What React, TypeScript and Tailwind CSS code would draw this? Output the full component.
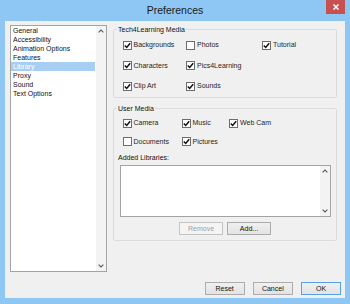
import React from "react";

function Check({ checked, label }: { checked: boolean; label: string }) {
  return (
    <div className="flex items-center h-[10px]">
      <div className="w-[9px] h-[9px] border border-[#6e6e6e] bg-white flex items-center justify-center shrink-0">
        {checked && (
          <svg width="7" height="7" viewBox="0 0 7 7">
            <path d="M0.8 3.4 L2.7 5.4 L6.2 1.2" stroke="#111" strokeWidth="1.5" fill="none" />
          </svg>
        )}
      </div>
      <span className="ml-[2px] text-[7px] leading-[10px] text-[#1e1e1e] whitespace-nowrap">{label}</span>
    </div>
  );
}

function Chevron({ up }: { up: boolean }) {
  return (
    <svg width="6" height="4" viewBox="0 0 6 4">
      <path d={up ? "M0.6 3.4 L3 1 L5.4 3.4" : "M0.6 0.6 L3 3 L5.4 0.6"} stroke="#5a5a5a" strokeWidth="1.1" fill="none" />
    </svg>
  );
}

function ScrollCol() {
  return (
    <div className="w-[10px] bg-[#f3f3f3] flex flex-col justify-between">
      <div className="h-[10px] flex items-center justify-center">
        <Chevron up />
      </div>
      <div className="h-[10px] flex items-center justify-center">
        <Chevron up={false} />
      </div>
    </div>
  );
}

function Btn({ label, disabled, def, w }: { label: string; disabled?: boolean; def?: boolean; w: string }) {
  const base = "h-[13.3px] flex items-center justify-center text-[7px] leading-[10px] border ";
  let cls = "border-[#acacac] bg-gradient-to-b from-[#f0f0f0] to-[#e3e3e3] text-[#111]";
  if (disabled) cls = "border-[#c4c4c4] bg-[#f4f4f4] text-[#a0a0a0]";
  if (def) cls = "border-[#56a0e6] bg-gradient-to-b from-[#f0f0f0] to-[#e3e3e3] text-[#111]";
  return <div className={base + cls + " " + w}>{label}</div>;
}

export default function App() {
  const items = ["General", "Accessibility", "Animation Options", "Features", "Library", "Proxy", "Sound", "Text Options"];
  return (
    <div className="w-[350px] h-[304px] bg-[#8ec6f4] flex flex-col font-['Liberation_Sans',Arial,sans-serif] overflow-hidden">
      <div className="h-[21px] grid grid-cols-[1fr_auto_1fr] items-start">
        <div />
        <div className="text-[10.5px] leading-[21px] text-[#1a1a1a]">Preferences</div>
        <div className="justify-self-end mr-[5px] w-[19px] h-[14px] bg-[#c75050] flex items-center justify-center">
          <svg width="6" height="6" viewBox="0 0 6 6">
            <path d="M0.5 0.5 L5.5 5.5 M5.5 0.5 L0.5 5.5" stroke="#fff" strokeWidth="1.5" />
          </svg>
        </div>
      </div>
      <div className="mx-[5px] h-[277px] bg-[#f0f0f0] flex flex-col">
        <div className="flex pt-[4px] pl-[5px]">
          <div className="w-[97px] h-[247px] border border-[#a3a3a3] bg-white flex">
            <div className="flex-1 flex flex-col pr-[1px]">
              {items.map((t) => (
                <div
                  key={t}
                  className={
                    "h-[9px] leading-[9px] text-[7px] pl-[2px] whitespace-nowrap " +
                    (t === "Library" ? "bg-[#a6cff3] text-white" : "text-[#111]")
                  }
                >
                  {t}
                </div>
              ))}
            </div>
            <ScrollCol />
          </div>
          <div className="ml-[6px] w-[224px] flex flex-col">
            <fieldset className="border border-[#dcdcdc] rounded-[2px] pb-[6px]">
              <legend className="ml-[3px] px-[1px] text-[7px] leading-[9px] text-[#111]">Tech4Learning Media</legend>
              <div className="grid grid-cols-[63.5px_76px_auto] gap-y-[10.5px] pt-[6px] pl-[8.5px]">
                <Check checked label="Backgrounds" />
                <Check checked={false} label="Photos" />
                <Check checked label="Tutorial" />
                <Check checked label="Characters" />
                <Check checked label="Pics4Learning" />
                <div />
                <Check checked label="Clip Art" />
                <Check checked label="Sounds" />
                <div />
              </div>
            </fieldset>
            <fieldset className="mt-[5.5px] border border-[#dcdcdc] rounded-[2px] pb-[4.7px]">
              <legend className="ml-[3px] px-[1px] text-[7px] leading-[9px] text-[#111]">User Media</legend>
              <div className="grid grid-cols-[59px_47.6px_auto] gap-y-[8.5px] pt-[5.5px] pl-[8.5px]">
                <Check checked label="Camera" />
                <Check checked label="Music" />
                <Check checked label="Web Cam" />
                <Check checked={false} label="Documents" />
                <Check checked label="Pictures" />
                <div />
              </div>
              <div className="mt-[6px] pl-[4px] text-[7px] leading-[9px] text-[#111]">Added Libraries:</div>
              <div className="mt-[3.5px] mx-[5.5px] h-[52px] border border-[#a3a3a3] bg-white flex justify-end">
                <ScrollCol />
              </div>
              <div className="mt-[5px] flex justify-center gap-[4px]">
                <Btn label="Remove" disabled w="w-[44px]" />
                <Btn label="Add..." w="w-[44px]" />
              </div>
            </fieldset>
          </div>
        </div>
        <div className="mt-[10px] flex justify-end gap-[8px] pr-[4px]">
          <Btn label="Reset" w="w-[40px]" />
          <Btn label="Cancel" w="w-[40.4px]" />
          <Btn label="OK" def w="w-[40px]" />
        </div>
      </div>
    </div>
  );
}
